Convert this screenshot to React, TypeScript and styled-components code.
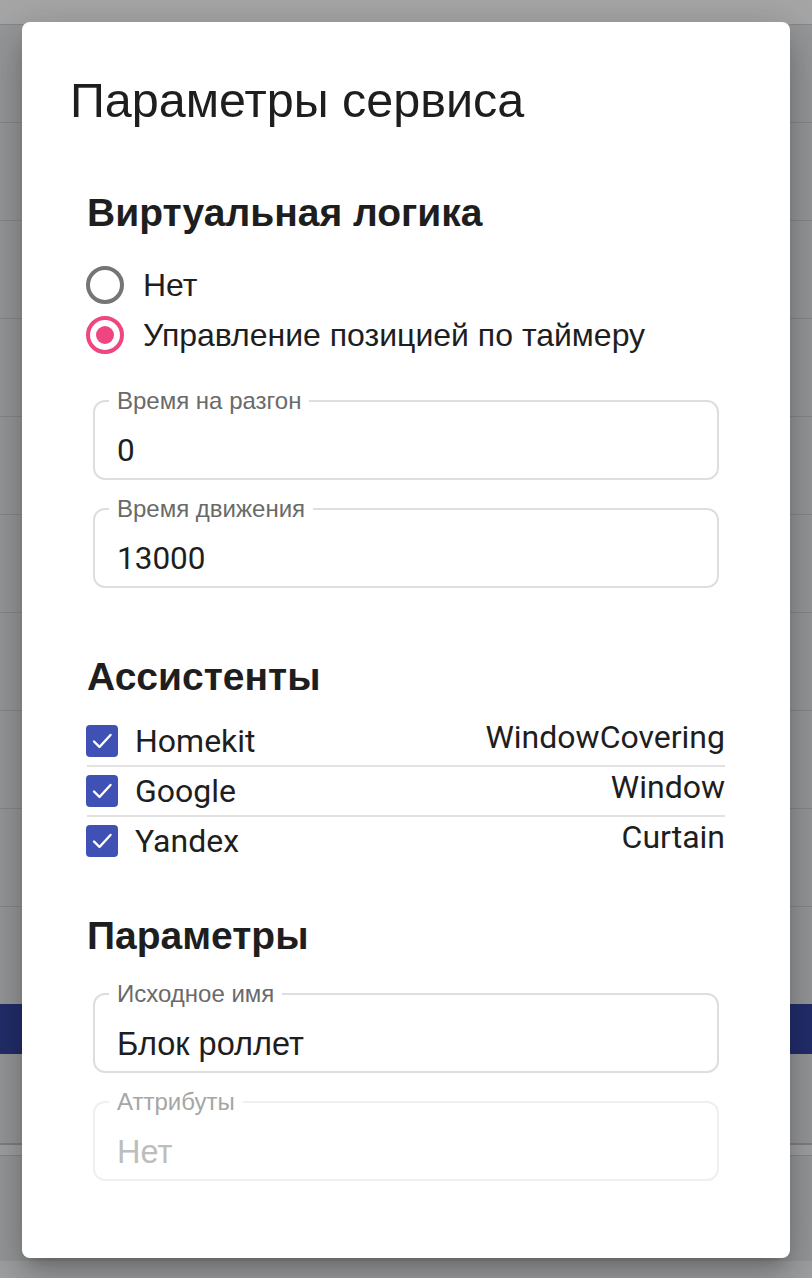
import React from 'react'
import styled, { createGlobalStyle } from 'styled-components'

const GlobalStyle = createGlobalStyle`
  html, body {
    margin: 0;
    padding: 0;
  }
  body {
    font-family: "Liberation Sans", Arial, sans-serif;
    color: #1f1f1f;
  }
`

const Page = styled.div`
  position: relative;
  width: 812px;
  height: 1278px;
  overflow: hidden;
  background: #f8f9fc;
`

const PageHeader = styled.div`
  height: 24px;
  background: #ffffff;
`

const ListRow = styled.div`
  height: 97px;
  border-top: 1px solid #d0d1d4;
  background: #e8eaeb;
`

const ActionBar = styled.div`
  height: 50px;
  background: #3748a6;
`

const Footer = styled.div`
  height: 89px;
  background: #e8eaeb;
  border-bottom: 2px solid #c6c7ca;
`

const FooterInner = styled.div`
  height: 105px;
  margin-top: 10px;
  border-top: 1px solid #cfd0d3;
  background: #e8eaeb;
`

const Backdrop = styled.div`
  position: absolute;
  inset: 0;
  background: rgba(0, 0, 0, 0.35);
  display: flex;
  justify-content: center;
  align-items: flex-start;
  padding-top: 22px;
`

const DialogBox = styled.div`
  width: 768px;
  height: 1236px;
  background: #ffffff;
  border-radius: 8px;
  box-shadow: 0 11px 15px -7px rgba(0,0,0,.2), 0 24px 38px 3px rgba(0,0,0,.14), 0 9px 46px 8px rgba(0,0,0,.12);
  box-sizing: border-box;
  padding-top: 51px;
`

const DialogTitle = styled.h2`
  margin: 0;
  padding: 0 48px;
  font-size: 48.5px;
  line-height: 55px;
  font-weight: 400;
  color: #1e1e1e;
`

const DialogContent = styled.div`
  padding: 0 65px;
`

const SectionTitle = styled.h3<{ $gap: number }>`
  margin: ${({ $gap }) => $gap}px 0 0;
  font-size: 39px;
  line-height: 44px;
  font-weight: 700;
  color: #1e1e1e;
`

const RadioGroup = styled.div`
  margin-top: 25px;
  display: flex;
  flex-direction: column;
`

const RadioRow = styled.label`
  height: 50px;
  display: flex;
  align-items: center;
  gap: 19px;
  font-size: 32px;
  line-height: 36px;
  color: #1e1e1e;
`

const RadioCircle = styled.span<{ $checked?: boolean }>`
  width: 38px;
  height: 38px;
  box-sizing: border-box;
  border-radius: 50%;
  border: 4px solid ${({ $checked }) => $checked ? '#ef4580' : '#757575'};
  display: flex;
  align-items: center;
  justify-content: center;
  margin-left: -1px;
  &::after {
    content: '';
    width: 18px;
    height: 18px;
    border-radius: 50%;
    background: ${({ $checked }) => $checked ? '#ef4580' : 'transparent'};
  }
`

const FieldList = styled.div<{ $gap: number }>`
  margin-top: ${({ $gap }) => $gap}px;
  display: flex;
  flex-direction: column;
  gap: 17px;
`

const Field = styled.fieldset<{ $disabled?: boolean }>`
  margin: 0 6px;
  padding: 0 22px 9px;
  border: 2px solid ${({ $disabled }) => $disabled ? '#efefef' : '#dedede'};
  border-radius: 12px;
  min-width: 0;
`

const FieldLabel = styled.legend<{ $disabled?: boolean }>`
  margin-left: -8px;
  padding: 0 8px;
  font-size: 24px;
  line-height: 24px;
  color: ${({ $disabled }) => $disabled ? '#a6a6a6' : '#6a6a6a'};
`

const FieldValue = styled.div<{ $latin?: boolean; $disabled?: boolean }>`
  margin-top: 20px;
  font-family: ${({ $latin }) => $latin ? 'Roboto, "Liberation Sans", sans-serif' : '"Liberation Sans", Arial, sans-serif'};
  font-size: ${({ $latin }) => $latin ? '31.5px' : '32.5px'};
  line-height: 36px;
  color: ${({ $disabled }) => $disabled ? '#bdbdbd' : '#1e1e1e'};
`

const AssistantList = styled.div`
  margin-top: 18px;
`

const AssistantRow = styled.div`
  height: 48px;
  display: flex;
  align-items: center;
  border-bottom: 2px solid #e2e2e2;
  &:last-child {
    border-bottom: 0;
  }
`

const CheckBox = styled.span`
  width: 32px;
  height: 32px;
  border-radius: 4px;
  background: #3f51b5;
  display: flex;
  align-items: center;
  justify-content: center;
  margin-left: -1px;
`

const AssistantName = styled.span`
  margin-left: 17px;
  font-family: Roboto, "Liberation Sans", sans-serif;
  font-size: 32px;
  line-height: 36px;
  color: #1e1e1e;
  flex: 1;
`

const AssistantType = styled.span`
  font-family: Roboto, "Liberation Sans", sans-serif;
  font-size: 32px;
  line-height: 36px;
  padding-bottom: 8px;
  color: #1e1e1e;
`

const CheckMark = () => (
  <svg width="32" height="32" viewBox="0 0 32 32" fill="none">
    <path d="M8 16.5l5.5 5.5L24.5 10" stroke="#ffffff" strokeWidth="2.4" strokeLinecap="round" strokeLinejoin="round" />
  </svg>
)

const assistants = [
  { name: 'Homekit', type: 'WindowCovering' },
  { name: 'Google', type: 'Window' },
  { name: 'Yandex', type: 'Curtain' },
]

export default function App() {
  return (
    <Page>
      <GlobalStyle />
      <PageHeader />
      {Array.from({ length: 10 }).map((_, i) => <ListRow key={i} />)}
      <ActionBar />
      <Footer />
      <FooterInner />

      <Backdrop>
        <DialogBox>
          <DialogTitle>Параметры сервиса</DialogTitle>
          <DialogContent>
            <SectionTitle $gap={63}>Виртуальная логика</SectionTitle>
            <RadioGroup>
              <RadioRow>
                <RadioCircle />
                Нет
              </RadioRow>
              <RadioRow>
                <RadioCircle $checked />
                Управление позицией по таймеру
              </RadioRow>
            </RadioGroup>

            <FieldList $gap={29}>
              <Field>
                <FieldLabel>Время на разгон</FieldLabel>
                <FieldValue $latin>0</FieldValue>
              </Field>
              <Field>
                <FieldLabel>Время движения</FieldLabel>
                <FieldValue $latin>13000</FieldValue>
              </Field>
            </FieldList>

            <SectionTitle $gap={67}>Ассистенты</SectionTitle>
            <AssistantList>
              {assistants.map(a => (
                <AssistantRow key={a.name}>
                  <CheckBox><CheckMark /></CheckBox>
                  <AssistantName>{a.name}</AssistantName>
                  <AssistantType>{a.type}</AssistantType>
                </AssistantRow>
              ))}
            </AssistantList>

            <SectionTitle $gap={49}>Параметры</SectionTitle>
            <FieldList $gap={24}>
              <Field>
                <FieldLabel>Исходное имя</FieldLabel>
                <FieldValue>Блок роллет</FieldValue>
              </Field>
              <Field $disabled>
                <FieldLabel $disabled>Аттрибуты</FieldLabel>
                <FieldValue $disabled>Нет</FieldValue>
              </Field>
            </FieldList>
          </DialogContent>
        </DialogBox>
      </Backdrop>
    </Page>
  )
}
